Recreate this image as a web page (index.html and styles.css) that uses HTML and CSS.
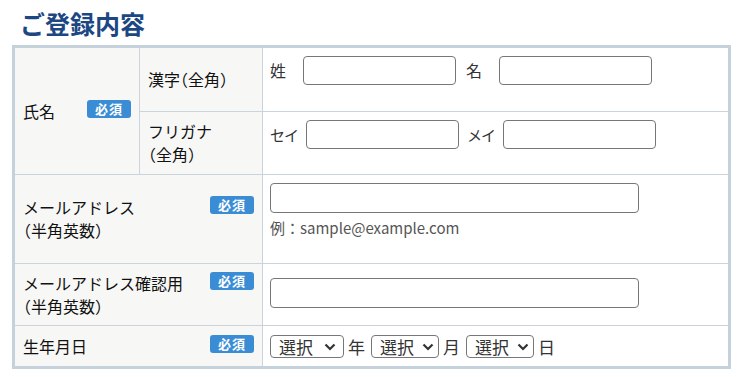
FILE: index.html
```html
<!DOCTYPE html>
<html lang="ja">
<head>
    <meta charset="UTF-8">
    <title>ご登録内容</title>
    <link rel="stylesheet" href="styles.css">
</head>

<body>
    <!--1. ご登録内容-->
    <section class="entry">
        <h2 class="etit">ご登録内容</h2>

        <table class="ftbl">
            <!--1-1.氏名-->
            <tr class="r1">
                <th rowspan="2" class="lbl"><span class="req">必須</span>氏名</th>
                <th class="sub">漢字<span class="kk">（全角）</span></th>
                <td class="val">
                    <div class="pair">
                        <span class="nm">姓</span>
                        <input type="text" class="txt">
                        <span class="nm">名</span>
                        <input type="text" class="txt">
                    </div>
                </td>
            </tr>
            <tr class="r2">
                <th class="sub">フリガナ<br><span class="kk">（全角）</span></th>
                <td class="val">
                    <div class="pair pair2">
                        <span class="nm">セイ</span>
                        <input type="text" class="txt">
                        <span class="nm">メイ</span>
                        <input type="text" class="txt">
                    </div>
                </td>
            </tr>
            <!--1-2.メール-->
            <tr class="r3">
                <th colspan="2" class="lbl"><span class="req">必須</span>メールアドレス<br><span class="kk">（半角英数）</span></th>
                <td class="val">
                    <input type="email" class="txt wide">
                    <p class="note">例：sample@example.com</p>
                </td>
            </tr>
            <tr class="r4">
                <th colspan="2" class="lbl"><span class="req">必須</span>メールアドレス確認用<br><span class="kk">（半角英数）</span></th>
                <td class="val conf">
                    <input type="email" class="txt wide">
                </td>
            </tr>
            <!--1-3.生年月日-->
            <tr class="r5">
                <th colspan="2" class="lbl"><span class="req">必須</span>生年月日</th>
                <td class="val mid">
                    <div class="bday">
                        <span class="selw selw-y">
                            <select class="sel"><option>選択</option></select>
                            <svg class="arw" viewBox="0 0 12 8"><path d="M1.5 1.5l4.5 4.5 4.5-4.5"/></svg>
                        </span>
                        <span class="unit">年</span>
                        <span class="selw">
                            <select class="sel"><option>選択</option></select>
                            <svg class="arw" viewBox="0 0 12 8"><path d="M1.5 1.5l4.5 4.5 4.5-4.5"/></svg>
                        </span>
                        <span class="unit">月</span>
                        <span class="selw">
                            <select class="sel"><option>選択</option></select>
                            <svg class="arw" viewBox="0 0 12 8"><path d="M1.5 1.5l4.5 4.5 4.5-4.5"/></svg>
                        </span>
                        <span class="unit">日</span>
                    </div>
                </td>
            </tr>
        </table>
    </section>
</body>
</html>
```

FILE: styles.css
```css
html,
body,
h2,
p {
    margin: 0;
    padding: 0;
}

body {
    background-color: #fff;
    font-family: "Noto Sans CJK JP", "Noto Sans", sans-serif;
    color: #111;
}

/*1.ご登録内容*/
.entry {
    padding: 6px 13px 0 12px;
}

.etit {
    padding-left: 8px;
    font-size: 25px;
    line-height: 34px;
    font-weight: bold;
    color: #1c4782;
    margin-bottom: 5px;
}

/*テーブル*/
.ftbl {
    width: 719px;
    border: 3px solid #c6d2db;
    border-collapse: separate;
    border-spacing: 0;
    table-layout: fixed;
}

.ftbl th,
.ftbl td {
    box-sizing: border-box;
    border-bottom: 1px solid #c9d4dc;
    font-size: 16px;
    line-height: 23px;
    text-align: left;
    font-weight: normal;
}

.ftbl th {
    background-color: #f7f7f5;
    border-right: 1px solid #c9d4dc;
    padding: 0 8px;
    vertical-align: middle;
}

/*かっこの左余白を詰める*/
.kk {
    font-feature-settings: "halt";
}

.ftbl .lbl {
    width: 125px;
}

.ftbl .sub {
    width: 123px;
}

.ftbl td {
    background-color: #fff;
    padding: 8px 7px 0;
    vertical-align: top;
}

.ftbl .r5 th,
.ftbl .r5 td {
    border-bottom: 0;
}

/*行の高さ*/
.r1 { height: 64px; }
.r2 { height: 63px; }
.r3 { height: 89px; }
.r4 { height: 62px; }
.r5 { height: 40px; }

/*必須バッジ*/
.req {
    float: right;
    width: 44px;
    height: 18px;
    border-radius: 3px;
    background-color: #3a8dd4;
    color: #fff;
    font-size: 13px;
    line-height: 18px;
    font-weight: bold;
    text-align: center;
    letter-spacing: 1px;
}

/*入力欄*/
.txt {
    box-sizing: border-box;
    width: 153px;
    height: 29px;
    margin: 0;
    padding: 0 5px;
    border: 1px solid #777;
    border-radius: 4px;
    font: 15px "Noto Sans CJK JP", sans-serif;
    background: #fff;
}

.txt.wide {
    display: block;
    width: 369px;
    height: 30px;
}

.pair {
    display: flex;
    align-items: center;
}

.pair .nm {
    width: 26px;
    margin-right: 7px;
    flex-shrink: 0;
    white-space: nowrap;
    color: #333;
}

.pair .txt {
    margin-right: 10px;
}

.pair2 .nm {
    width: 27px;
    margin-right: 9px;
    font-size: 15px;
    letter-spacing: -1px;
}

.pair2 .txt {
    margin-right: 8px;
}

.note {
    margin-top: 3px;
    font-size: 15px;
    line-height: 23px;
    color: #555;
}

.ftbl .conf {
    padding-top: 14px;
}

.ftbl .mid {
    padding-top: 0;
    vertical-align: middle;
}

/*生年月日*/
.bday {
    display: flex;
    align-items: center;
}

.unit {
    margin: 0 6px 0 4px;
    font-size: 17px;
    color: #333;
}

.selw {
    position: relative;
    display: block;
    width: 68px;
    height: 23px;
}

.selw-y {
    width: 74px;
}

.sel {
    appearance: none;
    box-sizing: border-box;
    display: block;
    width: 100%;
    height: 23px;
    margin: 0;
    padding: 0 0 0 8px;
    border: 1px solid #777;
    border-radius: 4px;
    font: 17px/21px "Noto Sans CJK JP", sans-serif;
    color: #333;
    background-color: #fff;
}

/*矢印*/
.arw {
    position: absolute;
    top: 8px;
    right: 5px;
    width: 12px;
    height: 8px;
    fill: none;
    stroke: #333;
    stroke-width: 2.2;
    pointer-events: none;
}

.selw-y .arw {
    right: 8px;
}
```
